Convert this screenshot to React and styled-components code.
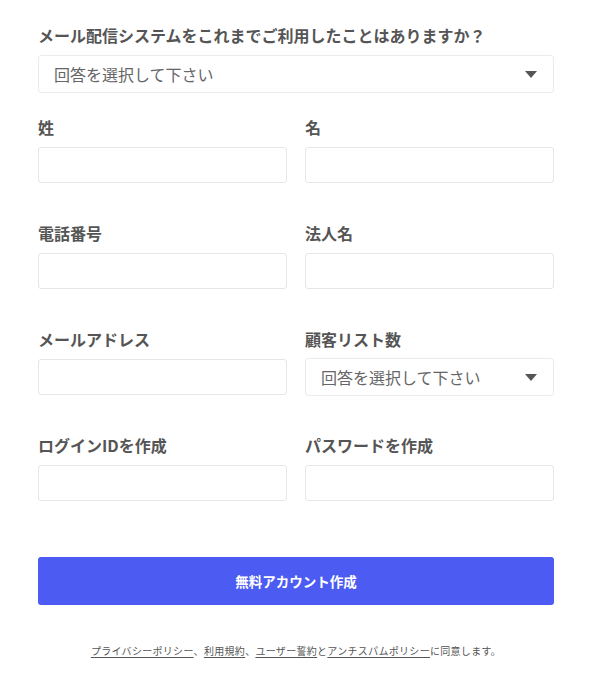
import styled, { createGlobalStyle } from 'styled-components';

const GlobalStyle = createGlobalStyle`
  body {
    margin: 0;
    background: #fff;
    font-family: "Noto Sans CJK JP", "Noto Sans", sans-serif;
  }
`;

const fields = [
  [
    { label: '姓', type: 'input' },
    { label: '名', type: 'input' },
  ],
  [
    { label: '電話番号', type: 'input' },
    { label: '法人名', type: 'input' },
  ],
  [
    { label: 'メールアドレス', type: 'input' },
    { label: '顧客リスト数', type: 'select' },
  ],
  [
    { label: 'ログインIDを作成', type: 'input' },
    { label: 'パスワードを作成', type: 'input' },
  ],
];

const Caret = () => (
  <StCaret width="12" height="7" viewBox="0 0 12 7">
    <path d="M0 0 L12 0 L6 7 Z" fill="#555" />
  </StCaret>
);

const Select = ({ slim }) => (
  <StSelect $slim={slim}>
    <span>回答を選択して下さい</span>
    <Caret />
  </StSelect>
);

const App = () => {
  return (
    <>
      <GlobalStyle />
      <StForm>
        <StQuestion>メール配信システムをこれまでご利用したことはありますか？</StQuestion>
        <Select />

        <StGrid>
          {fields.flat().map((f) => (
            <StField key={f.label}>
              <StLabel>{f.label}</StLabel>
              {f.type === 'select' ? <Select slim /> : <StInput />}
            </StField>
          ))}
        </StGrid>

        <StButton>無料アカウント作成</StButton>

        <StAgree>
          <u>プライバシーポリシー</u>、<u>利用規約</u>、<u>ユーザー誓約</u>と
          <u>アンチスパムポリシー</u>に同意します。
        </StAgree>
      </StForm>
    </>
  );
};

export default App;

const StForm = styled.div`
  width: 516px;
  padding: 23px 39px 20px 38px;
`;

const StQuestion = styled.div`
  font-size: 16px;
  font-weight: 700;
  line-height: 24px;
  color: #555;
  margin-bottom: 8px;
`;

const StSelect = styled.div`
  box-sizing: border-box;
  height: 38px;
  border: 1px solid #ebebeb;
  border-radius: 3px;
  display: flex;
  align-items: center;
  justify-content: space-between;
  padding: 0 15px;
  margin: ${(p) => (p.$slim ? '-1px 0 -1px' : '0')};
  font-size: 16px;
  color: #666;
`;

const StCaret = styled.svg`
  display: block;
  margin-right: 1px;
`;

const StGrid = styled.div`
  display: grid;
  grid-template-columns: 249px 249px;
  column-gap: 18px;
  row-gap: 40px;
  margin-top: 24px;
`;

const StField = styled.div`
  display: flex;
  flex-direction: column;
`;

const StLabel = styled.div`
  font-size: 16px;
  font-weight: 700;
  line-height: 20px;
  color: #555;
  margin-bottom: 10px;
`;

const StInput = styled.div`
  box-sizing: border-box;
  height: 36px;
  border: 1px solid #e6e6e6;
  border-radius: 3px;
  background: #fff;
`;

const StButton = styled.div`
  margin-top: 56px;
  height: 48px;
  border-radius: 3px;
  background: #4c5cf3;
  color: #fff;
  font-size: 13.5px;
  font-weight: 700;
  display: flex;
  align-items: center;
  justify-content: center;
`;

const StAgree = styled.div`
  margin-top: 38px;
  text-align: center;
  font-size: 10px;
  line-height: 16px;
  color: #555;
  letter-spacing: 0.3px;

  u {
    text-underline-offset: 2px;
  }
`;
